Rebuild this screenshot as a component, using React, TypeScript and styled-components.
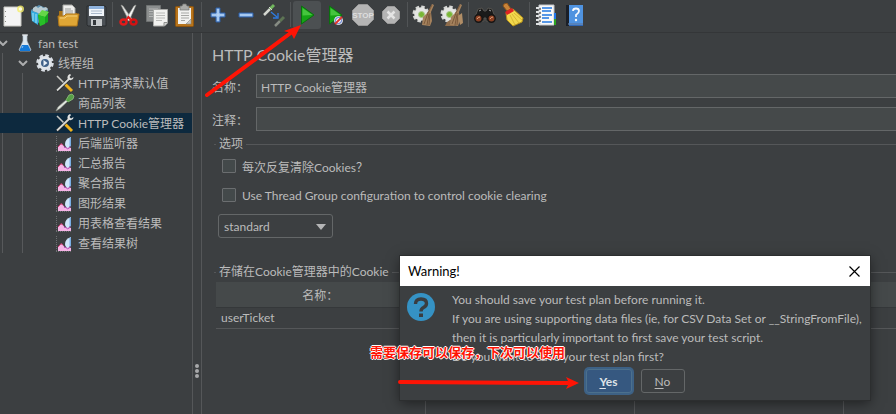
import React from "react";
import type { ReactNode } from "react";
import styled, { createGlobalStyle } from "styled-components";

const color = {
  panel: "#3c3f41",
  field: "#45494a",
  line: "#555759",
  fieldLine: "#646768",
  text: "#bbbbbb",
  selected: "#0d293e",
  red: "#ff1405",
};

const GlobalStyle = createGlobalStyle`
  *, *::before, *::after { box-sizing: border-box; }
  body {
    margin: 0;
    background: ${color.panel};
    overflow: hidden;
  }
  body, button, input, select {
    font-family: Lato, "Noto Sans CJK SC", sans-serif;
    font-size: 12px;
    color: ${color.text};
  }
`;

const Window = styled.div`
  position: relative;
  display: flex;
  flex-direction: column;
  height: 100vh;
  overflow: hidden;
`;

const Toolbar = styled.header`
  display: flex;
  align-items: center;
  height: 33px;
  flex: none;
  margin-left: -2px;
  padding-bottom: 3px;
  border-bottom: 1px solid #343638;
`;

const ToolButton = styled.button<{ $active?: boolean }>`
  display: grid;
  place-items: center;
  width: 28px;
  height: 28px;
  flex: none;
  padding: 0;
  border: 0;
  border-radius: 3px;
  background: ${(p) => (p.$active ? "#4c5052" : "transparent")};
`;

const Separator = styled.span`
  width: 1px;
  height: 25px;
  flex: none;
  margin: 0 2px;
  background: #515456;
`;

const Main = styled.div`
  display: flex;
  flex: 1;
  min-height: 0;
`;

const TreePanel = styled.nav`
  width: 193px;
  flex: none;
  border-right: 1px solid ${color.line};
`;

const TreeList = styled.ul`
  margin: 0;
  padding: 0;
  list-style: none;
`;

const TreeBranch = styled(TreeList)<{ $guide: number }>`
  background: linear-gradient(#57595b, #57595b) ${(p) => p.$guide}px 0 / 1px 100% no-repeat;
`;

const TreeRow = styled.div<{ $depth: number; $selected?: boolean }>`
  display: flex;
  align-items: center;
  gap: 3px;
  height: 20px;
  padding-left: ${(p) => p.$depth * 20}px;
  line-height: 20px;
  white-space: nowrap;
  ${(p) => p.$selected && `background: ${color.selected};`}
`;

const TreeLabel = styled.span`
  padding-top: 2px;
`;

const Twisty = styled.span`
  display: flex;
  justify-content: flex-start;
  width: 14px;
  margin-left: -2px;
`;

const IconSlot = styled.span`
  display: grid;
  place-items: center;
  width: 20px;
  height: 20px;
`;

const Splitter = styled.div`
  display: flex;
  flex-direction: column;
  align-items: center;
  justify-content: flex-end;
  gap: 1px;
  width: 9px;
  flex: none;
  padding-bottom: 36px;
  border-right: 1px solid ${color.line};

  i {
    width: 4px;
    height: 4px;
    border-radius: 2px;
    background: #a8a9aa;
  }
`;

const Content = styled.main`
  display: flex;
  flex-direction: column;
  flex: 1;
  min-width: 0;
  padding: 10px 0 0 10px;
`;

const Title = styled.h1`
  margin: 0 0 7px;
  font-size: 16px;
  font-weight: 400;
  line-height: 24px;
`;

const Field = styled.label`
  display: flex;
  align-items: center;
  gap: 8px;
  margin-bottom: 9px;
`;

const FieldName = styled.span`
  width: 36px;
  flex: none;
  white-space: nowrap;
`;

const TextBox = styled.input`
  flex: 1;
  min-width: 0;
  height: 24px;
  padding: 0 4px;
  border: 1px solid ${color.fieldLine};
  border-right: 0;
  border-radius: 0;
  background: ${color.field};
  outline: 0;
`;

const Group = styled.fieldset<{ $fill?: boolean }>`
  display: flex;
  flex-direction: column;
  align-items: flex-start;
  gap: 9px;
  min-width: 0;
  min-height: 0;
  flex: ${(p) => (p.$fill ? "1" : "none")};
  margin: ${(p) => (p.$fill ? "26px" : "-4px")} 0 0 2px;
  padding: ${(p) => (p.$fill ? "2px" : "4px")} 0 0 2px;
  border: 0;
  border-top: 1px solid ${color.line};
`;

const Legend = styled.legend`
  padding: 0 3px;
  line-height: 16px;
`;

const CheckLabel = styled.label`
  display: flex;
  align-items: center;
  gap: 6px;
  height: 20px;
  margin-left: 6px;
`;

const CheckBox = styled.input`
  appearance: none;
  width: 14px;
  height: 14px;
  margin: 0;
  border: 1px solid #6b6e70;
  border-radius: 1px;
  background: #43494a;
`;

const SelectBox = styled.div`
  position: relative;
  margin-left: 2px;

  select {
    appearance: none;
    width: 115px;
    height: 24px;
    padding: 0 5px;
    border: 1px solid ${color.fieldLine};
    border-radius: 3px;
    background: ${color.panel};
  }
  svg {
    position: absolute;
    right: 7px;
    top: 10px;
    pointer-events: none;
  }
`;

const TableArea = styled.div`
  display: grid;
  flex: 1;
  align-self: stretch;
  min-height: 0;
`;

const CookieTable = styled.table`
  width: 100%;
  height: 100%;
  table-layout: fixed;
  border-collapse: collapse;

  th,
  td {
    padding: 0 5px;
    border-right: 1px solid ${color.line};
    font-weight: 400;
    text-align: left;
  }
  th:last-child,
  td:last-child {
    border-right: 0;
  }
  th {
    height: 25px;
    background: ${color.field};
    border-bottom: 1px solid #35383a;
    text-align: center;
  }
  td {
    height: 21px;
    border-bottom: 1px solid ${color.line};
  }
`;

const FillerRow = styled.tr`
  height: 100%;

  td {
    height: auto;
    border-bottom: 0;
  }
`;

const Dialog = styled.section`
  position: absolute;
  left: 400px;
  top: 256px;
  width: 470px;
  background: ${color.panel};
  box-shadow: 0 0 0 1px #2c2e2f, 0 3px 12px rgba(0, 0, 0, 0.5);
`;

const DialogBar = styled.div`
  display: flex;
  align-items: center;
  justify-content: space-between;
  height: 30px;
  padding: 0 8px;
  background: #fff;
  color: #000;
  font-size: 13px;
`;

const CloseButton = styled.button`
  display: grid;
  place-items: center;
  padding: 2px;
  border: 0;
  background: none;
`;

const DialogBody = styled.div`
  display: flex;
  gap: 17px;
  padding: 4px 7px 0;
`;

const DialogText = styled.p`
  margin: 0;
  line-height: 19px;
  white-space: nowrap;
`;

const QuestionMark = styled.svg`
  flex: none;
  margin-top: 3px;
`;

const DialogActions = styled.div`
  display: flex;
  align-items: center;
  justify-content: center;
  gap: 5px;
  padding: 1px 0 5px;
`;

const DialogButton = styled.button<{ $primary?: boolean }>`
  width: ${(p) => (p.$primary ? "46px" : "44px")};
  height: 24px;
  padding: 0;
  border: 1px solid ${(p) => (p.$primary ? "#4c708c" : color.fieldLine)};
  border-radius: 3px;
  background: ${(p) => (p.$primary ? "#365880" : color.panel)};
  font-weight: ${(p) => (p.$primary ? 700 : 400)};
  margin: 2px;
  ${(p) => p.$primary && "box-shadow: 0 0 0 2px #3d6185; color: #dfe3e8;"}

  u {
    text-underline-offset: 2px;
  }
`;

const Note = styled.p`
  position: absolute;
  left: 370px;
  top: 342px;
  margin: 0;
  color: ${color.red};
  font-family: "Noto Sans CJK SC", sans-serif;
  font-size: 13px;
  font-weight: 700;
  line-height: 19px;
  white-space: nowrap;
  text-shadow: 1px 0 #fff, -1px 0 #fff, 0 1px #fff, 0 -1px #fff;
`;

const Arrow = styled.svg<{ $x: number; $y: number }>`
  position: absolute;
  left: ${(p) => p.$x}px;
  top: ${(p) => p.$y}px;
  pointer-events: none;
`;

const Icon = ({ children }: { children: ReactNode }) => (
  <svg width="24" height="24" viewBox="0 0 24 24" fill="none" aria-hidden="true">
    {children}
  </svg>
);

const NewIcon = () => (
  <Icon>
    <path d="M4 4h17v19H4z" fill="#f4f4f4" stroke="#c9c9c4" />
    <path d="M5.500 8v1M5.500 13v1M5.500 18v1" stroke="#8d8d88" />
    <circle cx="20.500" cy="6" r="3.500" fill="#f5ee6a" opacity=".8" />
    <circle cx="20.500" cy="6" r="1.700" fill="#fffde0" />
  </Icon>
);

const TemplatesIcon = () => (
  <Icon>
    <path d="M3 7l8-5 9 4v8l-9 6-7-4z" fill="#5a8fb0" />
    <path d="M5 5l3-2 2 2 3-2 2 2 3-1 2 2-8 5-7-3z" fill="#b9cbd2" />
    <path d="M3 8l7 2v12l-6-4z" fill="#34aee0" />
    <path d="M5 10v8M8 11v9" stroke="#a6e1f6" />
    <path d="M10 12l10-4v11l-8 4z" fill="#15a51e" />
    <path d="M10 12l4-5 7 2-4 5z" fill="#65d648" />
    <path d="M10 12l7 2v7l-5 2z" fill="#28bf28" />
  </Icon>
);

const OpenIcon = () => (
  <Icon>
    <path d="M3 8h6l2 2h10v12H3z" fill="#a97316" />
    <path d="M7 2h9l3 3v10H7z" fill="#eeeeec" stroke="#a9aaa6" />
    <path d="M9 6h6M9 8h8M9 10h8" stroke="#9a9c99" />
    <path d="M2 13h6l2-2h13l-2 12H3z" fill="#dfa635" stroke="#b07719" />
    <path d="M4 15h5l2-2h10" stroke="#f4cf79" />
  </Icon>
);

const SaveIcon = () => (
  <Icon>
    <path d="M3 3h18l1 1v19H4l-1-1z" fill="#4c5156" stroke="#292c2f" />
    <path d="M5 3h15v10H5z" fill="#f1f5fa" />
    <path d="M5 3h15v3H5z" fill="#8fb2dc" />
    <path d="M7 8h11M7 10.500h11" stroke="#aab9cb" />
    <path d="M7 16h11v7H7z" fill="#c8cbcd" />
    <path d="M9 17h3v5H9z" fill="#34383c" />
  </Icon>
);

const CutIcon = () => (
  <Icon>
    <path d="M4 2l2 1 9 13-3 2z" fill="#e6e6e4" stroke="#979994" strokeWidth=".6" />
    <path d="M19 2l-2 1-8 13 3 2z" fill="#f7f7f5" stroke="#979994" strokeWidth=".6" />
    <ellipse cx="6.500" cy="19" rx="3" ry="2.600" stroke="#e51a1a" strokeWidth="2.500" />
    <ellipse cx="16.500" cy="19" rx="3" ry="2.600" stroke="#d41212" strokeWidth="2.500" />
    <path d="M9 17l2.500-3 2.500 3" stroke="#e51a1a" strokeWidth="2" />
  </Icon>
);

const CopyIcon = () => (
  <Icon>
    <path d="M1.500 2.500h14v16h-14z" fill="#8b8e8e" stroke="#6f7272" />
    <path d="M4 6h9M4 8.500h9M4 11h4M4 13.500h4" stroke="#b5b7b6" />
    <path d="M8.500 6.500h14V20l-3 3h-11z" fill="#f1f1ef" stroke="#a9aaa8" />
    <path d="M11 10h9M11 12.500h9M11 15h9M11 17.500h6" stroke="#b9bab8" />
    <path d="M19 23v-3.500h3.500" fill="#d5d5d3" stroke="#8f908e" />
  </Icon>
);

const PasteIcon = () => (
  <Icon>
    <rect x="2.500" y="3.500" width="18" height="20" rx="1" fill="#b8741a" stroke="#8b5410" />
    <path d="M5 5h13v16H5z" fill="#f2f2f0" />
    <path d="M7 3h2l1-2h3l1 2h2v4H7z" fill="#aaaba8" stroke="#717270" strokeWidth=".7" />
    <path d="M8 10h8M8 12.500h8M8 15h8M8 17.500h4" stroke="#a7a8a5" />
    <path d="M13 21l5-5v5z" fill="#c9c9c6" stroke="#858683" strokeWidth=".6" />
  </Icon>
);

const PlusIcon = () => (
  <Icon>
    <path d="M10 5h4v5h5v4h-5v5h-4v-5H5v-4h5z" fill="#8bb6ea" stroke="#2c5ea6" />
    <path d="M12 6v12M6 12h12" stroke="#c1dbf7" />
  </Icon>
);

const MinusIcon = () => (
  <Icon>
    <path d="M5 10h14v4H5z" fill="#8bb6ea" stroke="#2c5ea6" />
    <path d="M6 12h12" stroke="#c1dbf7" />
  </Icon>
);

const ToggleIcon = () => (
  <Icon>
    <path d="M2 12l6-6" stroke="#d4d7d0" strokeWidth="2.500" />
    <path d="M8 6l4-4" stroke="#71b65e" strokeWidth="3" />
    <path d="M7 4l3 3" stroke="#d4d7d0" />
    <path d="M9 9l6 5M16 10v5h-5" stroke="#2e7be0" strokeWidth="1.300" />
    <path d="M13 23l5-5" stroke="#868b83" strokeWidth="2.500" />
    <path d="M18 18l4-4" stroke="#5d7454" strokeWidth="3" />
  </Icon>
);

const PlayIcon = ({ blocked }: { blocked?: boolean }) => (
  <Icon>
    <path d="M6.500 3v18L19 12z" fill="#16a316" stroke="#0a6f0e" />
    <path d="M7.500 5v7.500l10-.5z" fill="#45c53e" />
    {blocked && (
      <>
        <circle cx="15.500" cy="17.500" r="4" fill="#f3f3f3" stroke="#dadde4" />
        <circle cx="15.500" cy="17.500" r="3" stroke="#4b6fd0" />
        <path d="M12 21l7-7" stroke="#e2332c" strokeWidth="1.800" />
      </>
    )}
  </Icon>
);

const StopIcon = () => (
  <Icon>
    <path d="M7.500 1.500h9l6 6v9l-6 6h-9l-6-6v-9z" fill="#b4b4b4" stroke="#979797" />
    <text x="12" y="15" textAnchor="middle" fontSize="8" fontWeight="700" fill="#dedede" fontFamily="Liberation Sans, sans-serif">
      STOP
    </text>
  </Icon>
);

const ShutdownIcon = () => (
  <Icon>
    <path d="M8.500 3.500h7l5 5v7l-5 5h-7l-5-5v-7z" fill="#b4b4b4" stroke="#9b9b9b" />
    <path d="M8.500 8.500l7 7M15.500 8.500l-7 7" stroke="#e4e4e4" strokeWidth="2.500" />
  </Icon>
);

const GearBroomIcon = ({ double }: { double?: boolean }) => (
  <Icon>
    <circle cx="9" cy="11" r="7" stroke="#d6d7d5" strokeWidth="3" strokeDasharray="3.400 2.100" />
    <circle cx="9" cy="11" r="6.800" fill="#e4e5e3" />
    <circle cx="9.500" cy="11.500" r="3" fill="#79b735" stroke="#aac98c" />
    {double && <path d="M17 8l-2 6-8 5-2 4h9l7-8z" fill="#8e6c4b" />}
    <path d="M20 1l2 1-3 7 1 9-2 5-8-1 1-8 5-5z" fill="#a5825d" />
    <path d="M20 2l-4 8M16 10l-4 11M17 11l-2 11M18 10l-1 12" stroke="#765538" strokeWidth=".9" />
    {double && <path d="M22 10l1 10-3 2-2-9z" fill="#b08d66" />}
  </Icon>
);

const BinocularsIcon = () => (
  <Icon>
    <path d="M2 14l3-8 4-1 2 3h2l2-3 4 1 3 8v4h-9v-3h-2v3H2z" fill="#1a1a1a" stroke="#55534f" />
    <path d="M6 8l2-1M16 7l2 1" stroke="#a0a0a0" />
    <circle cx="5.500" cy="15.500" r="3.700" fill="#8a3f22" stroke="#151515" strokeWidth="1.500" />
    <circle cx="18.500" cy="15.500" r="3.700" fill="#8a3f22" stroke="#151515" strokeWidth="1.500" />
    <path d="M4 16q1-2 3-2M17 16q1-2 3-2" stroke="#e0a07c" />
  </Icon>
);

const BroomIcon = () => (
  <Icon>
    <path d="M3 1l3-1 4 6-4 2-4-5z" fill="#c88339" stroke="#89521b" />
    <path d="M5 10l7-4 10 9-1 4-9 4-6-6z" fill="#f2d84c" stroke="#b6911b" />
    <path d="M4 9l7-4 2 3-7 4z" fill="#df2323" />
    <path d="M9 12l5 10M11 11l7 9M13 10l8 7" stroke="#d0ac2c" strokeWidth=".8" />
  </Icon>
);

const NotebookIcon = () => (
  <Icon>
    <path d="M5 2h15v20H5z" fill="#f9f9f9" stroke="#c3c6ca" />
    <path d="M20 10h2v6h-2z" fill="#2478e8" />
    <path d="M20 16h2v6h-2z" fill="#2ca522" />
    <path d="M8 5h10M8 8h9M8 12h10M8 15h7M8 19h10" stroke="#2277e0" strokeWidth="1.300" />
    <path d="M2 5h5M2 9h5M2 13h5M2 17h5M2 21h5" stroke="#dfe1e2" strokeWidth="2" />
    <path d="M5 6h2M5 10h2M5 14h2M5 18h2" stroke="#222" />
  </Icon>
);

const HelpIcon = () => (
  <Icon>
    <path d="M4 2h17v21H4z" fill="#2f66b4" />
    <path d="M7 2h14v18H7z" fill="#4f93e0" />
    <path d="M4 2h3v21H4z" fill="#1a1f28" />
    <path d="M6 21h15" stroke="#7f9fc4" />
    <path d="M11 8q0-2.500 3-2.500t3 2.500q0 2-3 4v2" stroke="#f4f8fc" strokeWidth="1.800" />
    <circle cx="14" cy="17" r="1.200" fill="#f4f8fc" />
  </Icon>
);

const Small = ({ children }: { children: ReactNode }) => (
  <svg width="20" height="20" viewBox="0 0 20 20" fill="none" aria-hidden="true">
    {children}
  </svg>
);

const FlaskIcon = () => (
  <Small>
    <path d="M8 2h4v6l4 9-1 1H5l-1-1 4-9z" fill="#dbe6ef" stroke="#b4bfc9" strokeWidth=".7" />
    <path d="M7 12h6l2.500 5-.5 1H5l-.5-1z" fill="#1479d8" />
    <path d="M7 2h6" stroke="#f0f2f4" />
    <path d="M7 15l1-2" stroke="#87c0f4" />
  </Small>
);

const GearIcon = () => (
  <Small>
    <circle cx="10" cy="10" r="7.500" stroke="#d8dde3" strokeWidth="2.500" strokeDasharray="3.600 2.290" />
    <circle cx="10" cy="10" r="5.500" fill="#3e6088" stroke="#dfe4e9" strokeWidth="3" />
    <path d="M8.500 7v6l4-3z" fill="#e9f0f7" />
  </Small>
);

const ToolsIcon = () => (
  <Small>
    <path d="M2 3l8 8" stroke="#c9c9c5" strokeWidth="1.600" />
    <path d="M10 11l7 7" stroke="#f0b21c" strokeWidth="3" />
    <path d="M2 18L14 6" stroke="#252729" strokeWidth="3" />
    <path d="M2 17.500L14 6" stroke="#d7d9d6" strokeWidth="1.800" />
    <path d="M15 1q-3 1-2.500 4.500Q15 8.500 18 6l.5-2-2.500 1.500-1.500-1.500 1.500-2z" fill="#e3e4e2" />
  </Small>
);

const PipetteIcon = () => (
  <Small>
    <path d="M1 18l2-4 8-7 1.500 1.500-7.500 7z" fill="#e5e9e3" stroke="#8a9087" strokeWidth=".7" />
    <path d="M10 5l5 5" stroke="#2f4a2a" strokeWidth="2" />
    <path d="M11 7l3-5 3-1 2 2-1 3-5 3z" fill="#58a048" stroke="#98cb87" strokeWidth=".7" />
  </Small>
);

const ChartIcon = () => (
  <Small>
    <path d="M1.500 3v15M1 18.500h16" stroke="#6d7072" strokeDasharray="1 1" />
    <path d="M3 18v-4l3-3 2 1 2 3 3-1 3 1v3z" fill="#f6b4e6" />
    <path d="M3 14l2-2 1-1.500 2 1.500" stroke="#cf3d72" />
    <path d="M10 11q0-5 6-7v8l-3 3q-3-1-3-4z" fill="#cfe7fa" />
    <path d="M14.500 5l1.500-1v9l-1.500 1z" fill="#78aee4" />
    <path d="M9 14l2 .5 1.500 1.500 3-2" stroke="#b34fbb" />
  </Small>
);

const Chevron = () => (
  <svg width="10" height="6" viewBox="0 0 10 6" fill="none" aria-hidden="true">
    <path d="M1 1l4 4 4-4" stroke="#acadae" strokeWidth="2" />
  </svg>
);

type Tool = { name: string; icon: ReactNode; active?: boolean };

const toolGroups: Tool[][] = [
  [
    { name: "New", icon: <NewIcon /> },
    { name: "Templates", icon: <TemplatesIcon /> },
    { name: "Open", icon: <OpenIcon /> },
    { name: "Save", icon: <SaveIcon /> },
  ],
  [
    { name: "Cut", icon: <CutIcon /> },
    { name: "Copy", icon: <CopyIcon /> },
    { name: "Paste", icon: <PasteIcon /> },
  ],
  [
    { name: "Expand All", icon: <PlusIcon /> },
    { name: "Collapse All", icon: <MinusIcon /> },
    { name: "Toggle", icon: <ToggleIcon /> },
  ],
  [
    { name: "Start", icon: <PlayIcon />, active: true },
    { name: "Start no pauses", icon: <PlayIcon blocked /> },
    { name: "Stop", icon: <StopIcon /> },
    { name: "Shutdown", icon: <ShutdownIcon /> },
  ],
  [
    { name: "Clear", icon: <GearBroomIcon /> },
    { name: "Clear All", icon: <GearBroomIcon double /> },
  ],
  [
    { name: "Search", icon: <BinocularsIcon /> },
    { name: "Reset Search", icon: <BroomIcon /> },
  ],
  [
    { name: "Function Helper", icon: <NotebookIcon /> },
    { name: "Help", icon: <HelpIcon /> },
  ],
];

type Leaf = { label: string; icon: ReactNode; selected?: boolean };

const leaves: Leaf[] = [
  { label: "HTTP请求默认值", icon: <ToolsIcon /> },
  { label: "商品列表", icon: <PipetteIcon /> },
  { label: "HTTP Cookie管理器", icon: <ToolsIcon />, selected: true },
  { label: "后端监听器", icon: <ChartIcon /> },
  { label: "汇总报告", icon: <ChartIcon /> },
  { label: "聚合报告", icon: <ChartIcon /> },
  { label: "图形结果", icon: <ChartIcon /> },
  { label: "用表格查看结果", icon: <ChartIcon /> },
  { label: "查看结果树", icon: <ChartIcon /> },
];

type NodeProps = { depth: number; label: string; icon: ReactNode; open?: boolean; selected?: boolean };

const TreeNode = ({ depth, label, icon, open, selected }: NodeProps) => (
  <TreeRow $depth={depth} $selected={selected}>
    <Twisty>{open && <Chevron />}</Twisty>
    <IconSlot>{icon}</IconSlot>
    <TreeLabel>{label}</TreeLabel>
  </TreeRow>
);

export default function App() {
  return (
    <Window>
      <GlobalStyle />
      <Toolbar>
        {toolGroups.map((group, index) => (
          <React.Fragment key={index}>
            {index > 0 && <Separator />}
            {group.map((tool) => (
              <ToolButton key={tool.name} type="button" aria-label={tool.name} $active={tool.active}>
                {tool.icon}
              </ToolButton>
            ))}
          </React.Fragment>
        ))}
      </Toolbar>
      <Main>
        <TreePanel>
          <TreeList>
            <li>
              <TreeNode depth={0} label="fan test" icon={<FlaskIcon />} open />
              <TreeBranch $guide={2}>
                <li>
                  <TreeNode depth={1} label="线程组" icon={<GearIcon />} open />
                  <TreeBranch $guide={22}>
                    {leaves.map((leaf) => (
                      <li key={leaf.label}>
                        <TreeNode depth={2} {...leaf} />
                      </li>
                    ))}
                  </TreeBranch>
                </li>
              </TreeBranch>
            </li>
          </TreeList>
        </TreePanel>
        <Splitter>
          <i />
          <i />
          <i />
        </Splitter>
        <Content>
          <Title>HTTP Cookie管理器</Title>
          <Field>
            <FieldName>名称：</FieldName>
            <TextBox type="text" defaultValue="HTTP Cookie管理器" />
          </Field>
          <Field>
            <FieldName>注释：</FieldName>
            <TextBox type="text" />
          </Field>
          <Group>
            <Legend>选项</Legend>
            <CheckLabel>
              <CheckBox type="checkbox" />
              <span>每次反复清除Cookies？</span>
            </CheckLabel>
            <CheckLabel>
              <CheckBox type="checkbox" />
              <span>Use Thread Group configuration to control cookie clearing</span>
            </CheckLabel>
            <SelectBox>
              <select aria-label="Cookie policy" defaultValue="standard">
                <option>standard</option>
              </select>
              <svg width="10" height="6" viewBox="0 0 10 6" aria-hidden="true">
                <path d="M0 0h10L5 6z" fill="#b4b5b6" />
              </svg>
            </SelectBox>
          </Group>
          <Group $fill>
            <Legend>存储在Cookie管理器中的Cookie</Legend>
            <TableArea>
              <CookieTable>
                <colgroup>
                  <col width="209" />
                  <col width="209" />
                  <col width="209" />
                  <col />
                </colgroup>
                <thead>
                  <tr>
                    <th>名称：</th>
                    <th />
                    <th />
                    <th />
                  </tr>
                </thead>
                <tbody>
                  <tr>
                    <td>userTicket</td>
                    <td />
                    <td />
                    <td />
                  </tr>
                  <FillerRow aria-hidden="true">
                    <td />
                    <td />
                    <td />
                    <td />
                  </FillerRow>
                </tbody>
              </CookieTable>
            </TableArea>
          </Group>
        </Content>
      </Main>
      <Dialog role="dialog" aria-labelledby="dialog-title">
        <DialogBar>
          <span id="dialog-title">Warning!</span>
          <CloseButton type="button" aria-label="Close">
            <svg width="11" height="11" viewBox="0 0 11 11" aria-hidden="true">
              <path d="M.5.5l10 10M10.500.5l-10 10" stroke="#000" strokeWidth="1.200" />
            </svg>
          </CloseButton>
        </DialogBar>
        <DialogBody>
          <QuestionMark width="28" height="28" viewBox="0 0 28 28" fill="none" aria-hidden="true">
            <circle cx="14" cy="14" r="14" fill="#3592c4" />
            <path d="M8.500 11q0-5 5.500-5t5.500 4.500q0 2.500-3 4-2.500 1.300-2.500 4" stroke="#3a3d40" strokeWidth="3.400" />
            <path d="M12 20.500h4V24h-4z" fill="#3a3d40" />
          </QuestionMark>
          <DialogText>
            You should save your test plan before running it.
            <br />
            If you are using supporting data files (ie, for CSV Data Set or __StringFromFile),
            <br />
            then it is particularly important to first save your test script.
            <br />
            Do you want to save your test plan first?
          </DialogText>
        </DialogBody>
        <DialogActions>
          <DialogButton type="button" $primary>
            <u>Y</u>es
          </DialogButton>
          <DialogButton type="button">
            <u>N</u>o
          </DialogButton>
        </DialogActions>
      </Dialog>
      <Note>需要保存可以保存，下次可以使用</Note>
      <Arrow $x={200} $y={20} width="110" height="80" viewBox="0 0 110 80" aria-hidden="true">
        <path d="M7 75L92 12" stroke={color.red} strokeWidth="4" strokeLinecap="round" />
        <path d="M101 5L94 19 91 13 84 11z" fill={color.red} />
      </Arrow>
      <Arrow $x={396} $y={374} width="184" height="16" viewBox="0 0 184 16" aria-hidden="true">
        <path d="M4 8L172 9" stroke={color.red} strokeWidth="4" strokeLinecap="round" />
        <path d="M183 9L170 15l3-6-3-6z" fill={color.red} />
      </Arrow>
    </Window>
  );
}
